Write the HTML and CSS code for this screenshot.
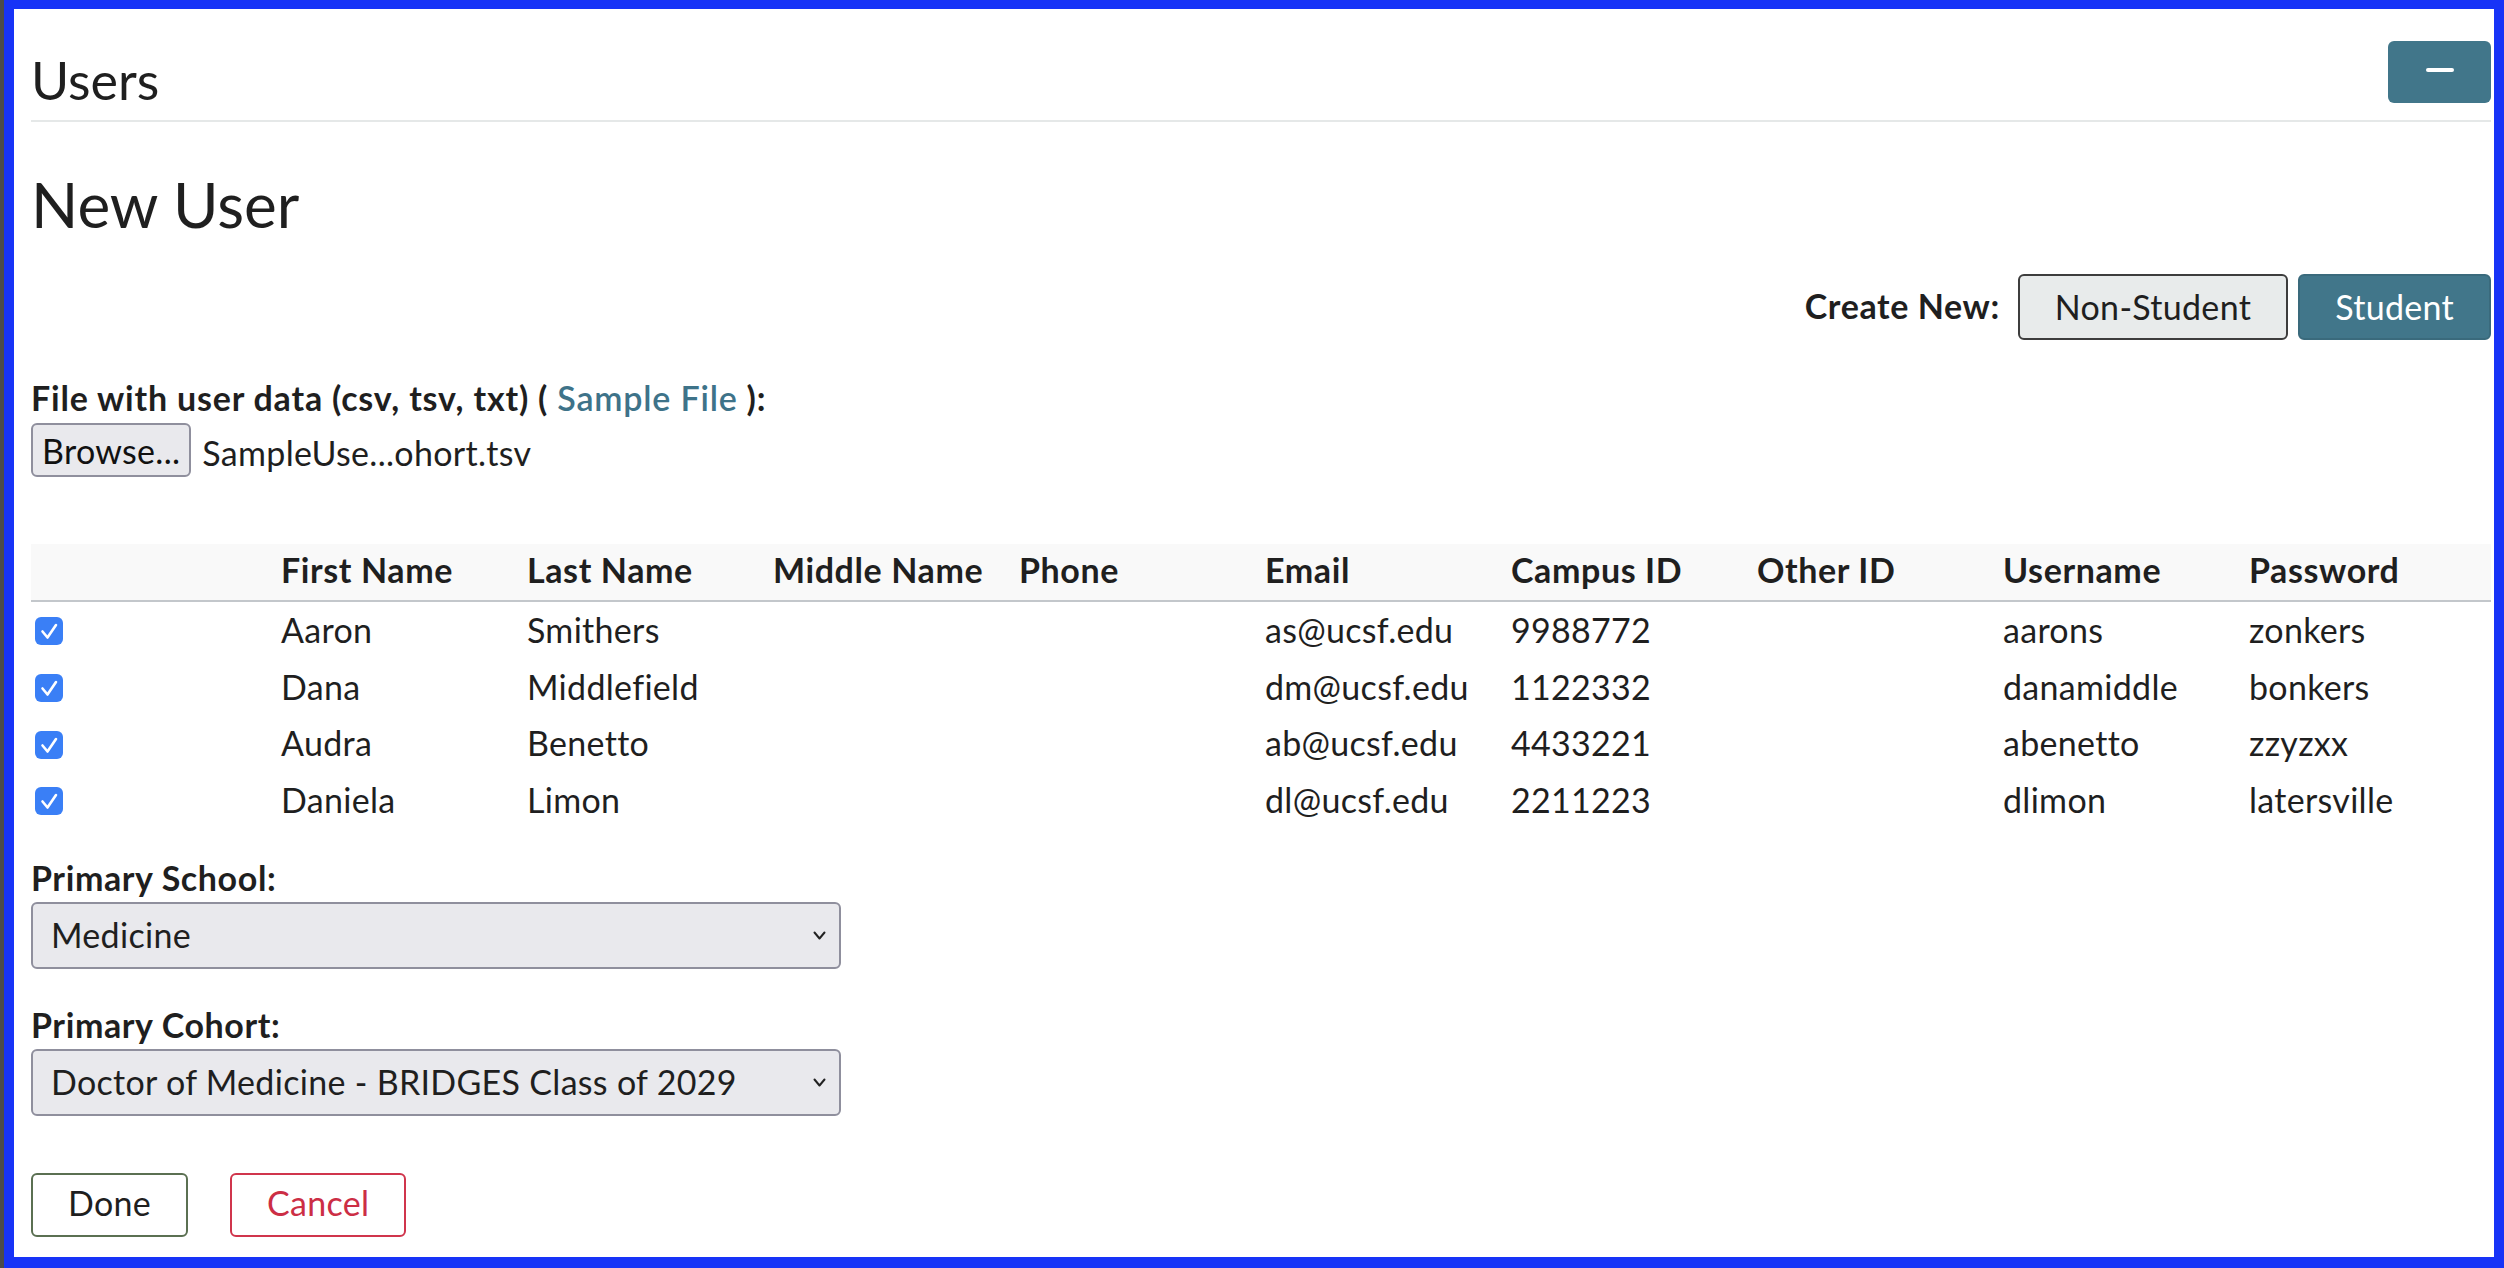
FILE: index.html
```html
<!DOCTYPE html>
<html lang="en">
<head>
<meta charset="utf-8">
<title>Users - New User</title>
<link rel="stylesheet" href="styles.css">
</head>
<body>
<div class="frame">
  <div class="page-header">
    <h1 class="page-title">Users</h1>
    <button class="collapse-btn" type="button" aria-label="Collapse"><span class="bar"></span></button>
  </div>

  <h2 class="section-title">New User</h2>

  <div class="create-row">
    <span class="create-label">Create New:</span>
    <button class="btn btn-light" type="button">Non-Student</button>
    <button class="btn btn-primary" type="button">Student</button>
  </div>

  <div class="file-label">File with user data (csv, tsv, txt) ( <a class="link" href="#">Sample File</a> ):</div>
  <div class="file-row">
    <span class="browse-btn">Browse...</span>
    <span class="file-name">SampleUse...ohort.tsv</span>
  </div>

  <table class="users-table">
    <thead>
      <tr>
        <th></th>
        <th>First Name</th>
        <th>Last Name</th>
        <th>Middle Name</th>
        <th>Phone</th>
        <th>Email</th>
        <th>Campus ID</th>
        <th>Other ID</th>
        <th>Username</th>
        <th>Password</th>
      </tr>
    </thead>
    <tbody>
      <tr>
        <td><span class="check"><svg viewBox="0 0 28 28" width="28" height="28"><path d="M7.5 14.5 L12.5 20.5 L21 8" fill="none" stroke="#fff" stroke-width="2.6" stroke-linecap="round" stroke-linejoin="round"/></svg></span></td>
        <td>Aaron</td><td>Smithers</td><td></td><td></td><td>as@ucsf.edu</td><td>9988772</td><td></td><td>aarons</td><td>zonkers</td>
      </tr>
      <tr>
        <td><span class="check"><svg viewBox="0 0 28 28" width="28" height="28"><path d="M7.5 14.5 L12.5 20.5 L21 8" fill="none" stroke="#fff" stroke-width="2.6" stroke-linecap="round" stroke-linejoin="round"/></svg></span></td>
        <td>Dana</td><td>Middlefield</td><td></td><td></td><td>dm@ucsf.edu</td><td>1122332</td><td></td><td>danamiddle</td><td>bonkers</td>
      </tr>
      <tr>
        <td><span class="check"><svg viewBox="0 0 28 28" width="28" height="28"><path d="M7.5 14.5 L12.5 20.5 L21 8" fill="none" stroke="#fff" stroke-width="2.6" stroke-linecap="round" stroke-linejoin="round"/></svg></span></td>
        <td>Audra</td><td>Benetto</td><td></td><td></td><td>ab@ucsf.edu</td><td>4433221</td><td></td><td>abenetto</td><td>zzyzxx</td>
      </tr>
      <tr>
        <td><span class="check"><svg viewBox="0 0 28 28" width="28" height="28"><path d="M7.5 14.5 L12.5 20.5 L21 8" fill="none" stroke="#fff" stroke-width="2.6" stroke-linecap="round" stroke-linejoin="round"/></svg></span></td>
        <td>Daniela</td><td>Limon</td><td></td><td></td><td>dl@ucsf.edu</td><td>2211223</td><td></td><td>dlimon</td><td>latersville</td>
      </tr>
    </tbody>
  </table>

  <div class="field-label school-label">Primary School:</div>
  <div class="select-box">
    <span>Medicine</span>
    <svg class="chev" viewBox="0 0 13 9" width="13" height="9"><path d="M1.5 1.5 L6.5 7.5 L11.5 1.5" fill="none" stroke="#222" stroke-width="2" stroke-linecap="round" stroke-linejoin="round"/></svg>
  </div>

  <div class="field-label cohort-label">Primary Cohort:</div>
  <div class="select-box">
    <span>Doctor of Medicine - BRIDGES Class of 2029</span>
    <svg class="chev" viewBox="0 0 13 9" width="13" height="9"><path d="M1.5 1.5 L6.5 7.5 L11.5 1.5" fill="none" stroke="#222" stroke-width="2" stroke-linecap="round" stroke-linejoin="round"/></svg>
  </div>

  <div class="actions">
    <button class="btn btn-done" type="button">Done</button>
    <button class="btn btn-cancel" type="button">Cancel</button>
  </div>
</div>
</body>
</html>
```
FILE: styles.css
```css
html, body {
  margin: 0;
  padding: 0;
}

body {
  font-family: Lato, "Open Sans", sans-serif;
  color: #1f1f1f;
  background: #4b4b4b;
  font-size: 34px;
  letter-spacing: 0.3px;
}

.frame {
  margin-left: 4px;
  height: 1268px;
  box-sizing: border-box;
  border-style: solid;
  border-color: #1733f7;
  border-width: 9px 10px 11px 10px;
  background: #fff;
  padding: 0 3px 0 17px;
  overflow: hidden;
}

.page-header {
  display: flex;
  justify-content: space-between;
  align-items: flex-start;
  padding-top: 32px;
  padding-bottom: 9px;
  border-bottom: 2px solid #e5e8e8;
}

.page-title {
  margin: 8px 0 0;
  font-size: 52px;
  font-weight: 400;
  line-height: 62px;
  letter-spacing: 0;
}

.collapse-btn {
  width: 103px;
  height: 62px;
  background: #41768a;
  border: none;
  border-radius: 6px;
  display: flex;
  align-items: center;
  justify-content: center;
  padding: 0;
}

.collapse-btn .bar {
  display: block;
  width: 28px;
  height: 4px;
  background: #fff;
  border-radius: 2px;
  margin-top: -4px;
}

.section-title {
  margin: 45px 0 0;
  font-size: 62px;
  font-weight: 400;
  line-height: 74px;
  letter-spacing: 0;
}

.create-row {
  display: flex;
  justify-content: flex-end;
  align-items: center;
  margin-top: 33px;
}

.create-label {
  font-weight: 700;
  letter-spacing: 0.6px;
  margin-right: 18px;
  margin-top: -4px;
}

.btn {
  height: 66px;
  box-sizing: border-box;
  border: 2px solid #3d3d3d;
  border-radius: 6px;
  padding: 0 35px;
  font-family: inherit;
  font-size: 34px;
  letter-spacing: 0.3px;
  line-height: 1;
  color: #1f1f1f;
  background: #fff;
}

.btn-light {
  background: #e8ebeb;
  border-color: #3d3d3d;
  margin-right: 10px;
}

.btn-primary {
  background: #41768a;
  border-color: #3a6a7c;
  color: #fff;
}

.file-label {
  margin-top: 34px;
  font-weight: 700;
  letter-spacing: 0.8px;
  line-height: 48px;
}

.link {
  color: #3e7389;
  text-decoration: none;
  font-weight: 600;
  letter-spacing: 0.8px;
}

.file-row {
  display: flex;
  align-items: center;
  margin-top: 1px;
  gap: 11px;
}

.browse-btn {
  display: flex;
  align-items: center;
  height: 54px;
  box-sizing: border-box;
  padding: 0 9px;
  border: 2px solid #8f8f9d;
  border-radius: 6px;
  background: #e9e9ed;
  color: #111;
}

.file-name {
  margin-top: 4px;
}

.users-table {
  margin-top: 67px;
  width: 100%;
  border-collapse: collapse;
  table-layout: fixed;
}

.users-table th {
  background: #f9f9f9;
  border-bottom: 2px solid #c3c7cb;
  padding: 2px 4px 6px;
  line-height: 48px;
  text-align: left;
  font-weight: 700;
  letter-spacing: 0.6px;
  white-space: nowrap;
}

.users-table td {
  padding: 4px;
  line-height: 48.7px;
  vertical-align: middle;
  white-space: nowrap;
}

.check {
  display: block;
  width: 28px;
  height: 28px;
  border-radius: 6px;
  background: #3a7ff6;
  margin-top: 2px;
}

.check svg {
  display: block;
}

.field-label {
  font-weight: 700;
  letter-spacing: 0.6px;
  line-height: 48px;
}

.school-label {
  margin-top: 25px;
}

.cohort-label {
  margin-top: 32px;
}

.select-box {
  width: 810px;
  height: 67px;
  box-sizing: border-box;
  border: 2px solid #8f8f9d;
  border-radius: 6px;
  background: #e9e9ed;
  display: flex;
  align-items: center;
  justify-content: space-between;
  padding: 0 13px 0 18px;
}

.select-box span {
  margin-top: -2px;
}

.chev {
  display: block;
}

.actions {
  display: flex;
  gap: 42px;
  margin-top: 57px;
}

.btn-done {
  height: 64px;
  border-color: #5b7052;
  background: #fff;
  padding-bottom: 3px;
}

.btn-cancel {
  height: 64px;
  border-color: #d0354c;
  color: #cc2e45;
  background: #fff;
  padding-bottom: 3px;
}
```
